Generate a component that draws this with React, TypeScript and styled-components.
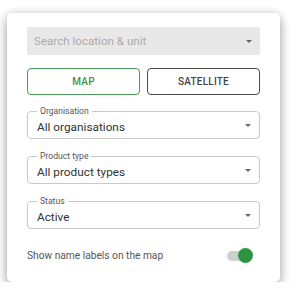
import React from "react";
import styled, { createGlobalStyle } from "styled-components";

const Global = createGlobalStyle`
  html, body { margin: 0; padding: 0; background: #ffffff; }
  body { font-family: Roboto, "Liberation Sans", Arial, sans-serif; }
`;

const Card = styled.div`
  box-sizing: border-box;
  margin: 13px 0 0 7px;
  width: 273px;
  height: 269px;
  background: #fff;
  border-radius: 5px;
  box-shadow: 0 5px 12px rgba(0, 0, 0, 0.32), 0 0 8px rgba(0, 0, 0, 0.12);
  padding: 14px 20px 0 20px;
  display: flex;
  flex-direction: column;
`;

const Search = styled.div`
  box-sizing: border-box;
  height: 28px;
  background: #e8e8e8;
  border-radius: 2px;
  display: flex;
  align-items: center;
  justify-content: space-between;
  padding: 0 7px 0 7px;
  font-size: 11.6px;
  color: #ababab;
`;

const Arrow = styled.span`
  width: 0;
  height: 0;
  border-left: 3.5px solid transparent;
  border-right: 3.5px solid transparent;
  border-top: 3.5px solid #666;
  margin-right: 1px;
`;

const ButtonRow = styled.div`
  display: grid;
  grid-template-columns: 1fr 1fr;
  gap: 7px;
  margin-top: 13px;
`;

const ModeButton = styled.div<{ $active?: boolean }>`
  box-sizing: border-box;
  height: 27px;
  border-radius: 4px;
  border: 1.5px solid ${(p) => (p.$active ? "#4a9a58" : "#4a4a4a")};
  color: ${(p) => (p.$active ? "#3f8f4c" : "#444")};
  font-size: 10px;
  font-weight: 500;
  letter-spacing: 0.2px;
  display: flex;
  align-items: center;
  justify-content: center;
`;

const Field = styled.div<{ $top: number }>`
  position: relative;
  box-sizing: border-box;
  height: 28px;
  margin-top: ${(p) => p.$top}px;
  border: 1px solid #c9c9c9;
  border-radius: 4px;
  display: flex;
  align-items: center;
  justify-content: space-between;
  padding: 0 7px 0 9px;
`;

const Legend = styled.span`
  position: absolute;
  left: 9px;
  top: -6px;
  padding: 0 3px;
  background: #fff;
  font-size: 8.6px;
  line-height: 10px;
  color: #555;
`;

const Value = styled.span`
  font-size: 11.8px;
  color: #333;
  margin-top: 3px;
`;

const ToggleRow = styled.div`
  display: flex;
  align-items: center;
  justify-content: space-between;
  margin-top: 21px;
  padding-right: 11px;
  font-size: 10.2px;
  color: #555;
`;

const Track = styled.div`
  position: relative;
  width: 22px;
  height: 10px;
  border-radius: 5px;
  background: #cfcfcf;
`;

const Thumb = styled.div`
  position: absolute;
  right: -4px;
  top: -3px;
  width: 15px;
  height: 15px;
  border-radius: 50%;
  background: #2e9444;
`;

const fields = [
  { label: "Organisation", value: "All organisations", top: 16 },
  { label: "Product type", value: "All product types", top: 17 },
  { label: "Status", value: "Active", top: 17 },
];

export default function App() {
  return (
    <>
      <Global />
      <Card>
        <Search>
          <span>Search location &amp; unit</span>
          <Arrow />
        </Search>
        <ButtonRow>
          <ModeButton $active>MAP</ModeButton>
          <ModeButton>SATELLITE</ModeButton>
        </ButtonRow>
        {fields.map((f) => (
          <Field key={f.label} $top={f.top}>
            <Legend>{f.label}</Legend>
            <Value>{f.value}</Value>
            <Arrow />
          </Field>
        ))}
        <ToggleRow>
          <span>Show name labels on the map</span>
          <Track>
            <Thumb />
          </Track>
        </ToggleRow>
      </Card>
    </>
  );
}
